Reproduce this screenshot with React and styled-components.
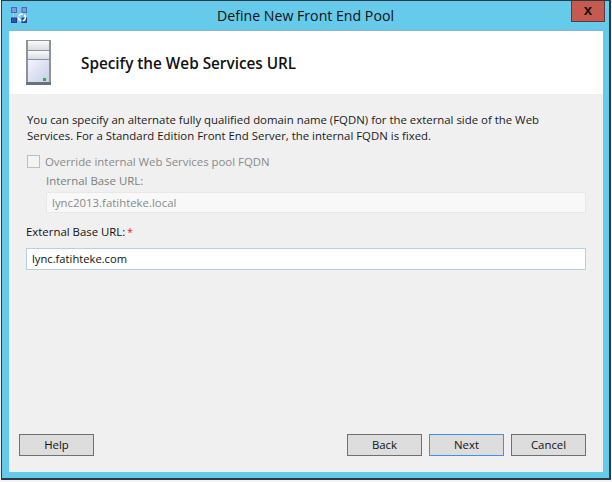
import React from 'react';
import styled, { createGlobalStyle } from 'styled-components';

const Global = createGlobalStyle`
  html, body { margin: 0; padding: 0; background: #f4f4f4; }
  body { font-family: "Open Sans", "Noto Sans", sans-serif; }
`;
const Page = styled.div`
  width: 610px;
  height: 480px;
  margin-left: 1px;
  box-sizing: border-box;
  border-style: solid;
  border-color: #2e3a42;
  border-width: 1px 2px 2px 1px;
  background: #66cbea;
  display: flex;
  flex-direction: column;
`;
const TitleBar = styled.div`
  height: 29px;
  flex: none;
  display: grid;
  grid-template-columns: 65px 1fr 70px;
  align-items: start;
  padding: 0 4px 0 9px;
`;
const AppIcon = styled.svg`
  width: 16px;
  height: 16px;
  margin-top: 6px;
`;
const Title = styled.div`
  text-align: center;
  font-size: 14.15px;
  line-height: 29px;
  color: #111;
`;
const Close = styled.div`
  justify-self: end;
  width: 34px;
  height: 21px;
  box-sizing: border-box;
  background: #c75a50;
  border: 1px solid #5a3a3e;
  border-top: none;
  font: bold 15px/17px "Liberation Sans", sans-serif;
  text-align: center;
  color: #111;
`;
const Content = styled.div`
  flex: 1;
  margin: 0 6px 6px 7px;
  background: #f0f0f0;
  display: flex;
  flex-direction: column;
  min-height: 0;
`;
const Header = styled.div`
  height: 64px;
  flex: none;
  box-sizing: border-box;
  border-top: 1px solid #8fb4c9;
  background: #fff;
  display: flex;
  align-items: center;
  padding-left: 17px;
`;
const ServerIcon = styled.svg`
  width: 25px;
  height: 45px;
`;
const Heading = styled.div`
  margin-left: 30px;
  font-size: 15.3px;
  font-weight: 600;
  color: #111;
`;
const Body = styled.div`
  flex: 1;
  padding: 18px 17px 0 17px;
  font-size: 11.4px;
  color: #1a1a1a;
`;
const Intro = styled.div`
  line-height: 16px;
  height: 32px;
  padding-left: 1px;
`;
const CheckRow = styled.div`
  display: flex;
  align-items: center;
  height: 14px;
  margin: 10px 0 0 1px;
  gap: 5px;
  color: #8a8a8a;
`;
const Check = styled.div`
  width: 13px;
  height: 13px;
  box-sizing: border-box;
  border: 1px solid #bdbdbd;
  background: #f4f4f4;
`;
const SubLabel = styled.div`
  margin: 5px 0 0 20px;
  line-height: 16px;
  color: #7d7d7d;
`;
const DisabledInput = styled.div`
  margin: 3px 0 0 20px;
  height: 21px;
  box-sizing: border-box;
  border: 1px solid #e8e8e8;
  background: #f8f8f8;
  color: #8a8a8a;
  line-height: 19px;
  padding-left: 5px;
`;
const Label = styled.div`
  margin-top: 11px;
  line-height: 16px;
  color: #111;
  & > span { color: #e8112d; margin-left: 2px; font-size: 10px; }
`;
const TextInput = styled.div`
  margin-top: 8px;
  height: 22px;
  box-sizing: border-box;
  border: 1px solid #b5cfe7;
  background: #fff;
  color: #111;
  font-size: 11.2px;
  line-height: 20px;
  padding-left: 5px;
`;
const Footer = styled.div`
  flex: none;
  display: flex;
  gap: 7px;
  padding: 0 17px 16px 10px;
`;
const Button = styled.div`
  width: 75px;
  height: 22px;
  box-sizing: border-box;
  border: 1px solid ${p => (p.$focus ? '#3c94e8' : '#707070')};
  background: #dddddd;
  text-align: center;
  font-size: 11.4px;
  line-height: 20px;
  color: #111;
`;
const Spacer = styled.div`
  flex: 1;
`;

export default function App() {
  return (
    <Page>
      <Global />
      <TitleBar>
        <AppIcon viewBox="0 0 16 16">
          <path d="M2.5 3 L13 14 M13.5 3 L3 14 M2.5 3 V14 M13.5 3 V14" stroke="#b9c8ee" strokeWidth="1" fill="none" />
          <rect x="0.5" y="0.5" width="5" height="5" fill="#7d9be2" stroke="#4a68b8" />
          <rect x="11" y="0.5" width="4.5" height="5" fill="#7d9be2" stroke="#4a68b8" />
          <rect x="0.5" y="11" width="5" height="4.5" fill="#2f54b0" stroke="#23407f" />
          <rect x="11" y="11" width="4.5" height="4.5" fill="#2f54b0" stroke="#23407f" />
          <circle cx="11" cy="10.5" r="3.4" fill="none" stroke="#ffffff" strokeWidth="1.5" strokeDasharray="4.5 1.5" />
        </AppIcon>
        <Title>Define New Front End Pool</Title>
        <Close>x</Close>
      </TitleBar>
      <Content>
        <Header>
          <ServerIcon viewBox="0 0 25 45">
            <defs>
              <linearGradient id="top" x1="0" y1="0" x2="0" y2="1">
                <stop offset="0" stopColor="#fbfbfb" />
                <stop offset="1" stopColor="#d8dbe2" />
              </linearGradient>
              <linearGradient id="face" x1="0" y1="0" x2="1" y2="1">
                <stop offset="0" stopColor="#f2f4fb" />
                <stop offset="1" stopColor="#c6d0ea" />
              </linearGradient>
            </defs>
            <rect x="0" y="0" width="25" height="45" fill="#8e9399" />
            <rect x="0" y="42" width="25" height="3" fill="#69727d" />
            <rect x="2" y="1" width="21" height="9" fill="url(#top)" />
            <rect x="2" y="11" width="21" height="8" fill="url(#top)" />
            <rect x="2" y="20" width="21" height="22" fill="url(#face)" />
            <rect x="17" y="38" width="3" height="3" fill="#18c020" />
          </ServerIcon>
          <Heading>Specify the Web Services URL</Heading>
        </Header>
        <Body>
          <Intro>
            You can specify an alternate fully qualified domain name (FQDN) for the external side of the Web<br />
            Services. For a Standard Edition Front End Server, the internal FQDN is fixed.
          </Intro>
          <CheckRow>
            <Check />
            Override internal Web Services pool FQDN
          </CheckRow>
          <SubLabel>Internal Base URL:</SubLabel>
          <DisabledInput>lync2013.fatihteke.local</DisabledInput>
          <Label>External Base URL:<span>*</span></Label>
          <TextInput>lync.fatihteke.com</TextInput>
        </Body>
        <Footer>
          <Button>Help</Button>
          <Spacer />
          <Button>Back</Button>
          <Button $focus>Next</Button>
          <Button>Cancel</Button>
        </Footer>
      </Content>
    </Page>
  );
}
